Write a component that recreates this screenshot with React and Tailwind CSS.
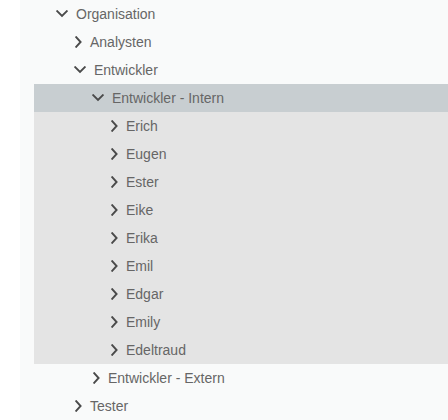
import React from "react";

function Down() {
  return (
    <svg width="12" height="8" viewBox="0 0 12 8" className="mr-[8px] shrink-0">
      <path d="M1.2 1.2 L6 6 L10.8 1.2" fill="none" stroke="#4a4a4a" strokeWidth="1.9" strokeLinecap="square" />
    </svg>
  );
}

function Right() {
  return (
    <svg width="7" height="12" viewBox="0 0 7 12" className="ml-[1px] mr-[8px] shrink-0">
      <path d="M1.2 1.2 L5.6 6 L1.2 10.8" fill="none" stroke="#4a4a4a" strokeWidth="1.9" strokeLinecap="square" />
    </svg>
  );
}

function Row({ pl, open, label }) {
  return (
    <div className="flex h-[28px] items-center" style={{ paddingLeft: pl }}>
      {open ? <Down /> : <Right />}
      <span className="text-[14px] text-[#666666] leading-none">{label}</span>
    </div>
  );
}

export default function App() {
  const people = ["Erich", "Eugen", "Ester", "Eike", "Erika", "Emil", "Edgar", "Emily", "Edeltraud"];
  return (
    <div className="h-[420px] w-[448px] overflow-hidden bg-white" style={{ fontFamily: '"Liberation Sans", Arial, sans-serif' }}>
      <div className="ml-[20px] h-full bg-[#f9fafa]">
        <Row pl={36} open label="Organisation" />
        <Row pl={54} label="Analysten" />
        <Row pl={54} open label="Entwickler" />
        <div className="ml-[14px] bg-[#e4e4e4]">
          <div className="bg-[#c8ced1]">
            <Row pl={58} open label="Entwickler - Intern" />
          </div>
          {people.map((p) => (
            <Row key={p} pl={76} label={p} />
          ))}
        </div>
        <Row pl={72} label="Entwickler - Extern" />
        <Row pl={54} label="Tester" />
      </div>
    </div>
  );
}
